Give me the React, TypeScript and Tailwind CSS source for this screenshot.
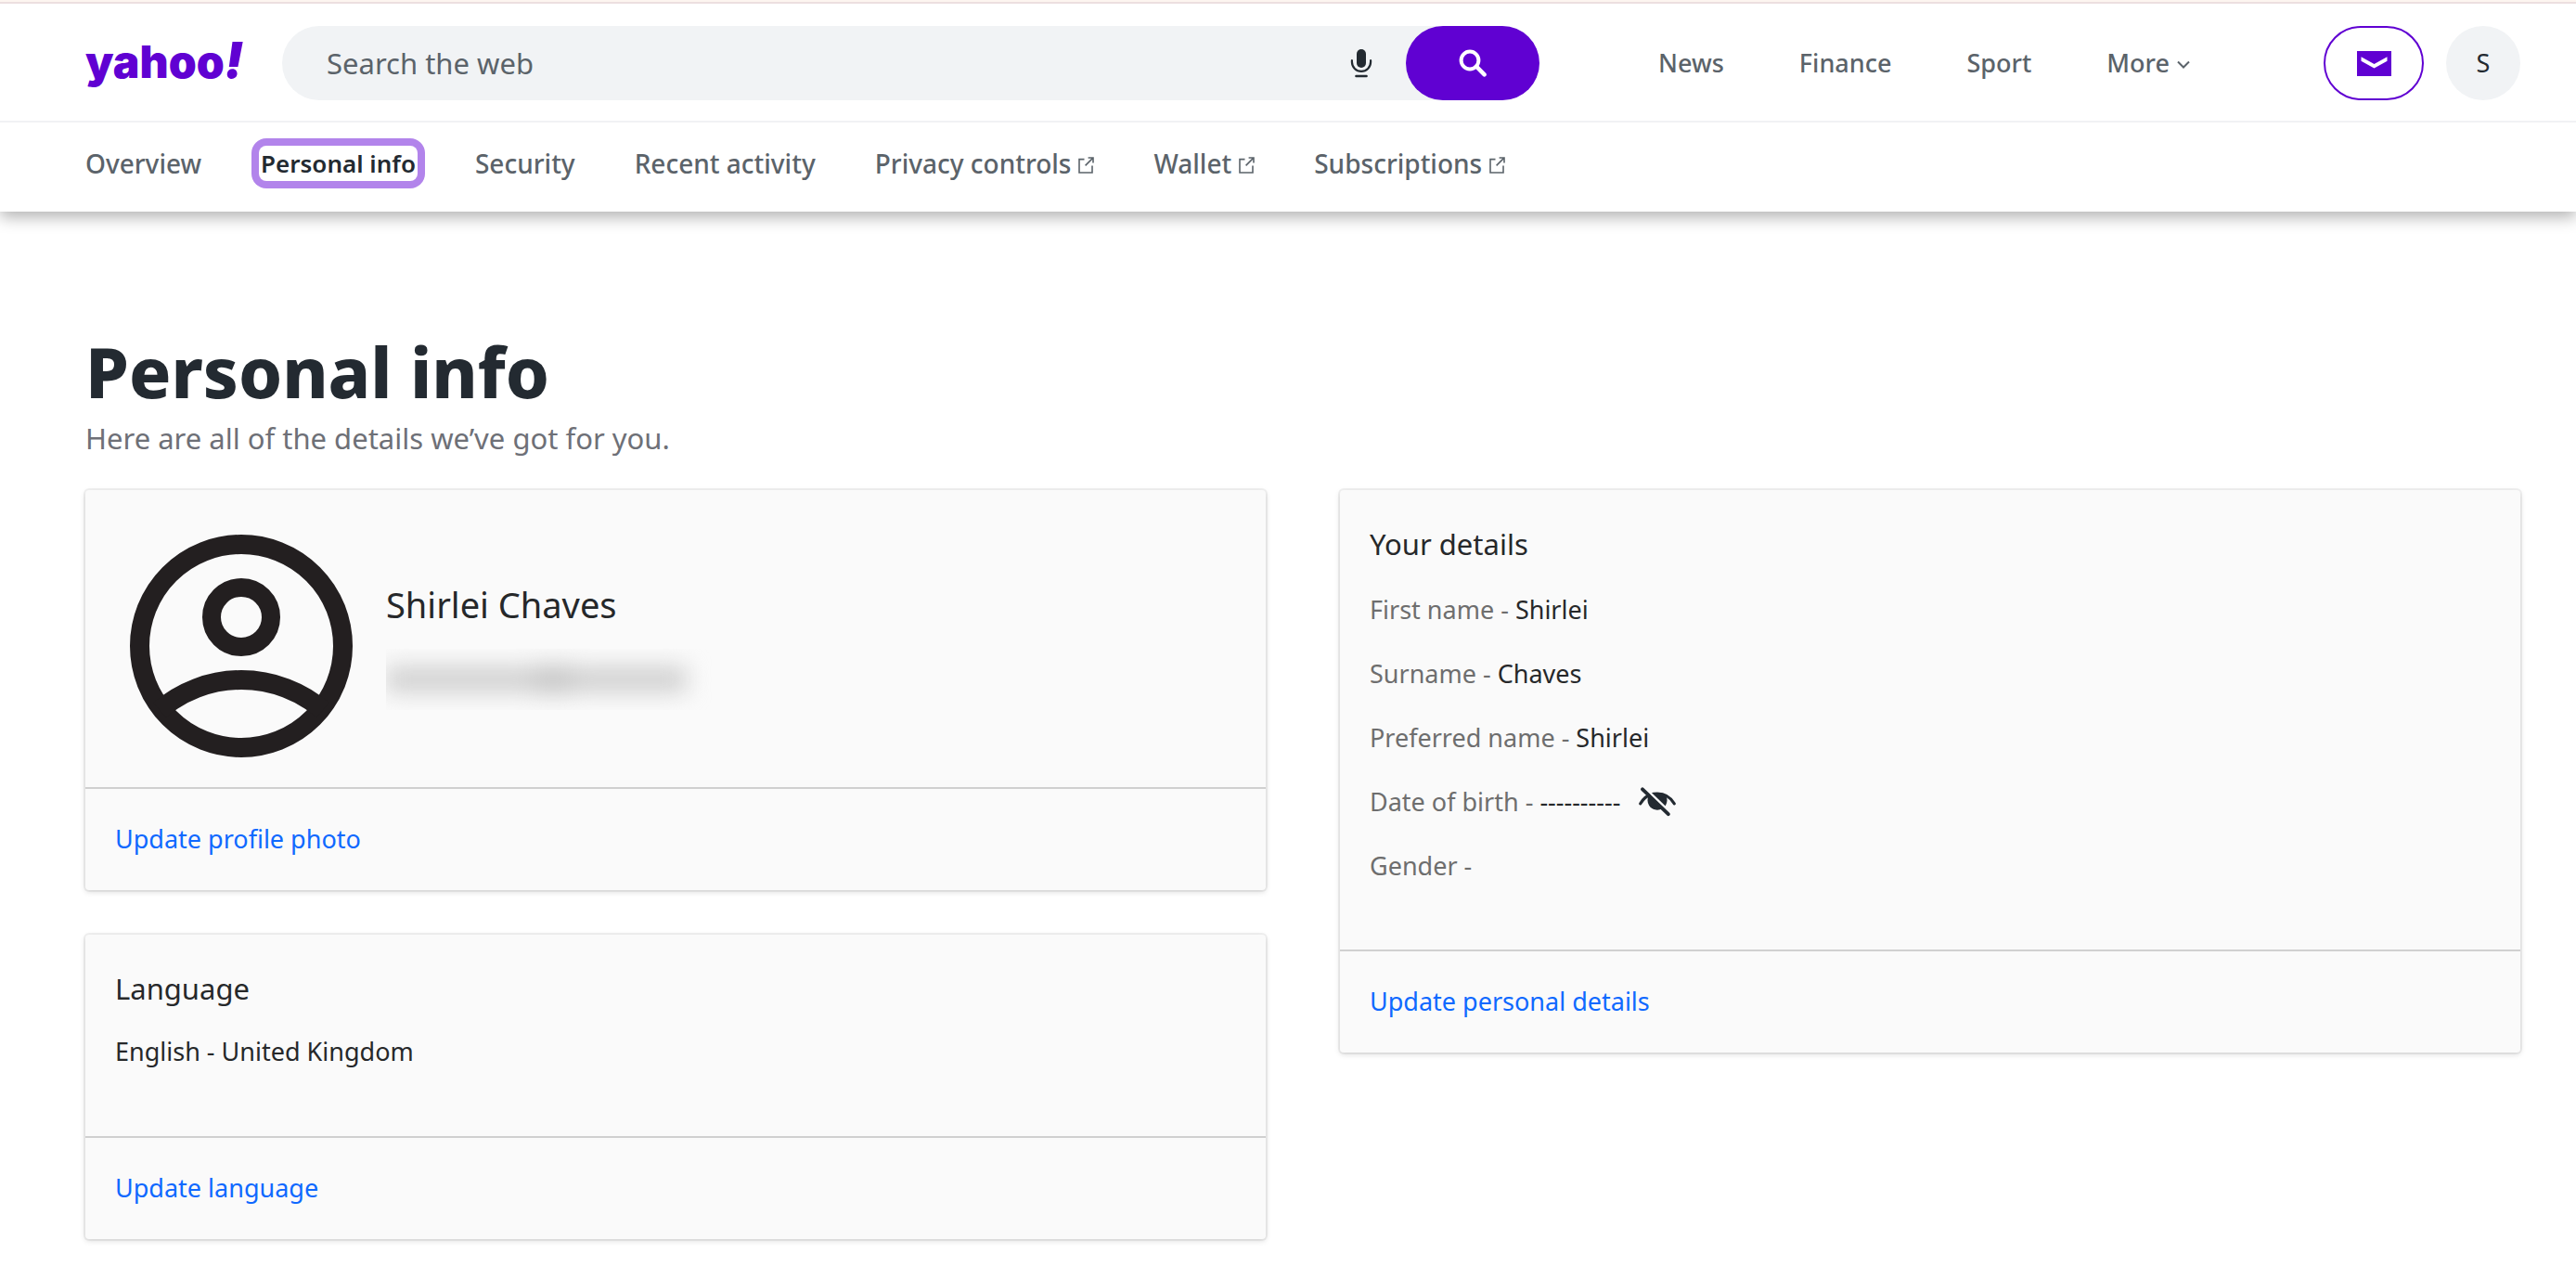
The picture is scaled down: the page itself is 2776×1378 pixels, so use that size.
import type { ReactNode } from "react";

function ExternalIcon() {
  return (
    <svg viewBox="0 0 17 18" className="mt-1 h-[18px] w-[17px]" fill="none" stroke="currentColor" strokeWidth="1.6" aria-hidden="true">
      <path d="M6.5 2.6H1v14.4h14V9.6" />
      <path d="M7.6 9.4 15.6 1.4M10.6 1h5.4v5.6" />
    </svg>
  );
}

function MicIcon() {
  return (
    <svg viewBox="0 0 24 32" className="h-8 w-6" fill="none" aria-hidden="true">
      <rect x="7" y="1" width="10" height="20" rx="5" fill="#232a31" />
      <path d="M1.9 13.2v1.6a10.1 10.1 0 0 0 20.2 0v-1.6" stroke="#232a31" strokeWidth="2.2" strokeLinecap="round" />
      <path d="M6.4 30h11.2" stroke="#232a31" strokeWidth="2.4" strokeLinecap="round" />
    </svg>
  );
}

function SearchIcon() {
  return (
    <svg viewBox="0 0 30 30" className="h-[30px] w-[30px]" fill="none" stroke="#fff" aria-hidden="true">
      <circle cx="12" cy="12" r="9.4" strokeWidth="4" />
      <path d="m19 18.6 8.6 8.8" strokeWidth="4.4" strokeLinecap="round" />
    </svg>
  );
}

function MailIcon() {
  return (
    <svg viewBox="0 0 37 27" className="h-[27px] w-[37px]" aria-hidden="true">
      <rect width="37" height="27" fill="#6001d2" />
      <path d="M4.5 6.2 18.5 14l14-7.8v4.6l-14 7.8-14-7.8z" fill="#fff" />
    </svg>
  );
}

function EyeOffIcon() {
  return (
    <svg viewBox="0 0 40 32" className="h-8 w-10" fill="none" strokeLinecap="round" aria-hidden="true">
      <path d="M1.8 17.8C6 10.6 12 7 20 7s14 3.6 18.2 10.8" stroke="#232a31" strokeWidth="3.2" />
      <path d="M10.6 9.5C13 7 16 6 20 6s7 1 9.4 3.5A10.5 10.5 0 1 1 10.6 9.5" fill="#232a31" />
      <path d="M8 2.5 35.5 29" stroke="#fafafa" strokeWidth="3" strokeLinecap="butt" />
      <path d="M4 2.3 31.8 29.2" stroke="#232a31" strokeWidth="3.8" />
    </svg>
  );
}

function ProfileIcon() {
  return (
    <svg viewBox="0 0 240 240" className="h-60 w-60 shrink-0" fill="none" stroke="#231f20" role="img" aria-label="Profile photo">
      <circle cx="120" cy="120" r="109.5" strokeWidth="21" />
      <circle cx="120" cy="89" r="32" strokeWidth="20" />
      <path d="M32 189A135.5 135.5 0 0 1 208 189" strokeWidth="21" />
    </svg>
  );
}

function Card({ children, action }: { children: ReactNode; action: string }) {
  return (
    <section className="rounded-[4px] bg-[#fafafa] shadow-[0_0_0_2px_rgba(0,0,0,0.05),0_2px_6px_rgba(0,0,0,0.14)]">
      {children}
      <div className="border-t-2 border-[#d0d0d0] px-8 pt-[34px] pb-[35px] text-[27px] leading-10">
        <a href="#" className="text-[#0f69ff]">{action}</a>
      </div>
    </section>
  );
}

const sections = [
  { label: "Overview" },
  { label: "Personal info", current: true },
  { label: "Security" },
  { label: "Recent activity" },
  { label: "Privacy controls", external: true },
  { label: "Wallet", external: true },
  { label: "Subscriptions", external: true },
];

const details = [
  { label: "First name", value: "Shirlei" },
  { label: "Surname", value: "Chaves" },
  { label: "Preferred name", value: "Shirlei" },
  { label: "Date of birth", value: "----------", hidden: true },
  { label: "Gender", value: "" },
];

export default function App() {
  return (
    <div className="min-h-screen bg-white font-['Noto_Sans',sans-serif] text-[#232a31]">
      <div className="h-1 border-b-2 border-[#ecdfe0] bg-[#fdf5f0]" />

      <header className="relative z-10 flex items-center border-b-2 border-[#f1f2f4] bg-white pt-6 pr-[60px] pb-[22px] pl-[92px]">
        <a href="#" aria-label="yahoo!" className="flex w-[172px] shrink-0 items-baseline pb-1 font-['Inter',sans-serif] text-[48px] leading-[56px] font-black text-[#6001d2]">
          yahoo<span className="text-[54px] italic">!</span>
        </a>
        <form className="ml-10 flex h-20 flex-1 items-center rounded-full bg-[#f1f3f5]" onSubmit={(e) => e.preventDefault()}>
          <input
            type="text"
            aria-label="Search the web"
            placeholder="Search the web"
            className="h-full min-w-0 flex-1 bg-transparent pl-12 text-[31px] outline-none placeholder:text-[#5b636a]"
          />
          <button type="button" aria-label="Search by voice" className="mr-9">
            <MicIcon />
          </button>
          <button type="submit" aria-label="Search" className="flex h-20 w-36 items-center justify-center rounded-full bg-[#6001d2]">
            <SearchIcon />
          </button>
        </form>
        <nav aria-label="Sites" className="ml-32 flex items-center gap-[81px] text-[27px] leading-10 font-medium text-[#5b636a]">
          <a href="#">News</a>
          <a href="#">Finance</a>
          <a href="#">Sport</a>
          <button type="button" className="flex items-center gap-2">
            More
            <svg viewBox="0 0 14 10" className="mt-1 h-[10px] w-[14px]" fill="none" stroke="currentColor" strokeWidth="2" aria-hidden="true">
              <path d="m1 1.5 6 6 6-6" />
            </svg>
          </button>
        </nav>
        <a href="#" aria-label="Mail" className="ml-36 flex h-20 w-[108px] shrink-0 items-center justify-center rounded-full border-2 border-[#6001d2]">
          <MailIcon />
        </a>
        <button type="button" aria-label="Account" className="ml-6 h-20 w-20 shrink-0 rounded-full bg-[#f1f3f5] text-[27px]">
          S
        </button>
      </header>

      <nav aria-label="Account" className="flex h-24 items-center gap-16 pr-[60px] pb-2 pl-[92px] text-[28px] leading-[38px] font-medium text-[#5b636a] shadow-[0_6px_16px_rgba(0,0,0,0.3)]">
        {sections.map(({ label, current, external }) =>
          current ? (
            <a key={label} href="#" aria-current="page" className="-mx-0.5 rounded-lg px-0.5 text-[26px] font-semibold text-[#232a31] ring-8 ring-[#b284eb]">
              {label}
            </a>
          ) : (
            <a key={label} href="#" className="flex items-center gap-2">
              {label}
              {external && <ExternalIcon />}
            </a>
          ),
        )}
      </nav>

      <main className="pt-[132px] pr-[60px] pb-10 pl-[92px]">
        <h1 className="text-[75px] leading-[80px] font-extrabold">Personal info</h1>
        <p className="mt-3 text-[31px] leading-10 text-[#6e7077]">Here are all of the details we’ve got for you.</p>

        <div className="mt-9 grid grid-cols-2 items-start gap-20">
          <div className="flex flex-col gap-12">
            <Card action="Update profile photo">
              <div className="flex items-center gap-9 pt-12 pr-8 pb-8 pl-12">
                <ProfileIcon />
                <div className="min-w-0">
                  <h2 className="text-[38px] leading-[48px] text-[#26282a]">Shirlei Chaves</h2>
                  <div className="mt-6 flex h-[66px] w-[360px] items-center overflow-hidden" aria-hidden="true">
                    <div className="flex h-7 items-center blur-[12px]">
                      <div className="h-7 w-40 bg-[#d0d0d0]" />
                      <div className="h-8 w-10 bg-[#c8c8c8]" />
                      <div className="h-7 w-[124px] bg-[#d0d0d0]" />
                    </div>
                  </div>
                </div>
              </div>
            </Card>

            <Card action="Update language">
              <div className="px-8 pt-[38px] pb-[71px] text-[#26282a]">
                <h2 className="text-[31px] leading-10">Language</h2>
                <p className="mt-7 text-[27px] leading-10">English - United Kingdom</p>
              </div>
            </Card>
          </div>

          <Card action="Update personal details">
            <div className="px-8 pt-[38px] pb-[70px] text-[#26282a]">
              <h2 className="text-[31px] leading-10">Your details</h2>
              <ul className="mt-[31px] flex flex-col gap-[29px] text-[27px] leading-10">
                {details.map(({ label, value, hidden }) => (
                  <li key={label} className="flex items-center">
                    <p>
                      <span className="text-[#6e6e6e]">{label} - </span>
                      {value}
                    </p>
                    {hidden && (
                      <button type="button" aria-label="Show date of birth" className="ml-5">
                        <EyeOffIcon />
                      </button>
                    )}
                  </li>
                ))}
              </ul>
            </div>
          </Card>
        </div>
      </main>
    </div>
  );
}
